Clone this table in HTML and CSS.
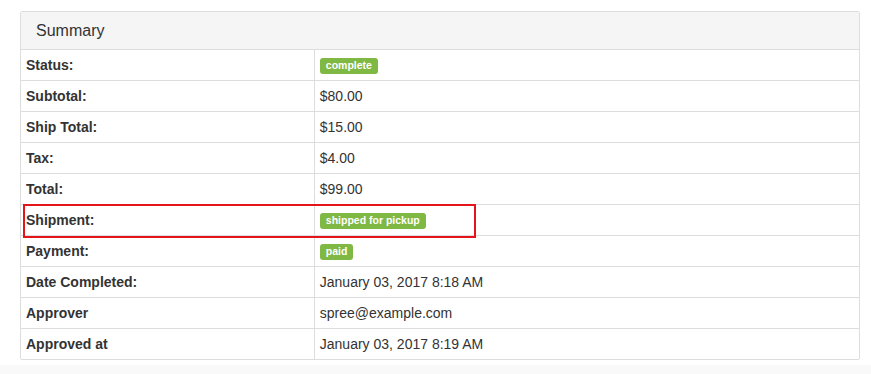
FILE: index.html
```html
<!DOCTYPE html>
<html>
<head>
<meta charset="utf-8">
<link rel="stylesheet" href="styles.css">
</head>
<body>
<div class="page">
  <div class="panel">
    <div class="panel-heading"><h3 class="panel-title">Summary</h3></div>
    <table class="summary">
      <tbody>
        <tr><th>Status:</th><td><span class="label">complete</span></td></tr>
        <tr><th>Subtotal:</th><td>$80.00</td></tr>
        <tr><th>Ship Total:</th><td>$15.00</td></tr>
        <tr><th>Tax:</th><td>$4.00</td></tr>
        <tr><th>Total:</th><td>$99.00</td></tr>
        <tr><th>Shipment:</th><td><span class="label">shipped for pickup</span></td></tr>
        <tr><th>Payment:</th><td><span class="label">paid</span></td></tr>
        <tr><th>Date Completed:</th><td>January 03, 2017 8:18 AM</td></tr>
        <tr><th>Approver</th><td>spree@example.com</td></tr>
        <tr><th>Approved at</th><td>January 03, 2017 8:19 AM</td></tr>
      </tbody>
    </table>
  </div>
  <div class="highlight"></div>
</div>
<div class="footer-strip"></div>
</body>
</html>
```

FILE: styles.css
```css
html, body {
  margin: 0;
  padding: 0;
  background: #ffffff;
}
body {
  font-family: "Liberation Sans", Arial, Helvetica, sans-serif;
  font-size: 14px;
  line-height: 20px;
  color: #333333;
}
.page {
  position: relative;
  padding: 11px 11px 0 20px;
}
.panel {
  border: 1px solid #dddddd;
  border-radius: 2px;
  background: #ffffff;
}
.panel-heading {
  background: #f5f5f5;
  border-bottom: 1px solid #dddddd;
  padding: 10px 15px;
}
.panel-title {
  margin: 0;
  font-size: 16px;
  font-weight: normal;
  line-height: 17px;
  color: #333333;
}
.summary {
  width: 100%;
  border-collapse: collapse;
  border-spacing: 0;
}
.summary tr + tr th,
.summary tr + tr td {
  border-top: 1px solid #dddddd;
}
.summary th,
.summary td {
  padding: 5px;
  height: 20px;
  line-height: 20px;
  text-align: left;
  vertical-align: top;
}
.summary th {
  width: 35%;
  font-weight: bold;
  border-right: 1px solid #dddddd;
}
.label {
  display: inline-block;
  background: #7fb843;
  color: #ffffff;
  font-size: 10.5px;
  font-weight: bold;
  line-height: 1;
  padding: 2px 6px 3px;
  border-radius: 3px;
  vertical-align: 1px;
}
.highlight {
  position: absolute;
  left: 23px;
  top: 204px;
  width: 449px;
  height: 30px;
  border: 2px solid #e5141b;
}
.footer-strip {
  margin-top: 5px;
  height: 20px;
  background: #f9f9f9;
}
```
